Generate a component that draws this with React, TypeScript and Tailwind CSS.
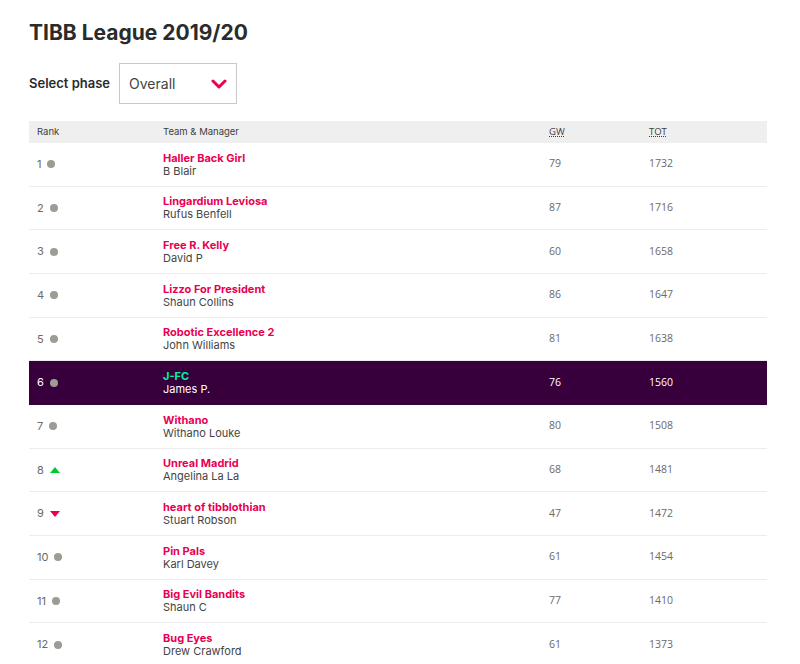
import React from "react";

type Row = { rank: number; team: string; manager: string; gw: number; tot: number; move: "same" | "up" | "down"; me?: boolean };

const rows: Row[] = [
  { rank: 1, team: "Haller Back Girl", manager: "B Blair", gw: 79, tot: 1732, move: "same" },
  { rank: 2, team: "Lingardium Leviosa", manager: "Rufus Benfell", gw: 87, tot: 1716, move: "same" },
  { rank: 3, team: "Free R. Kelly", manager: "David P", gw: 60, tot: 1658, move: "same" },
  { rank: 4, team: "Lizzo For President", manager: "Shaun Collins", gw: 86, tot: 1647, move: "same" },
  { rank: 5, team: "Robotic Excellence 2", manager: "John Williams", gw: 81, tot: 1638, move: "same" },
  { rank: 6, team: "J-FC", manager: "James P.", gw: 76, tot: 1560, move: "same", me: true },
  { rank: 7, team: "Withano", manager: "Withano Louke", gw: 80, tot: 1508, move: "same" },
  { rank: 8, team: "Unreal Madrid", manager: "Angelina La La", gw: 68, tot: 1481, move: "up" },
  { rank: 9, team: "heart of tibblothian", manager: "Stuart Robson", gw: 47, tot: 1472, move: "down" },
  { rank: 10, team: "Pin Pals", manager: "Karl Davey", gw: 61, tot: 1454, move: "same" },
  { rank: 11, team: "Big Evil Bandits", manager: "Shaun C", gw: 77, tot: 1410, move: "same" },
  { rank: 12, team: "Bug Eyes", manager: "Drew Crawford", gw: 61, tot: 1373, move: "same" },
];

function Move({ m }: { m: Row["move"] }) {
  if (m === "up")
    return (
      <svg width="10" height="6" viewBox="0 0 10 6" className="ml-[6px]">
        <polygon points="0,6 5,0 10,6" fill="#01c832" />
      </svg>
    );
  if (m === "down")
    return (
      <svg width="10" height="6" viewBox="0 0 10 6" className="ml-[6px]">
        <polygon points="0,0 10,0 5,6" fill="#e90052" />
      </svg>
    );
  return <span className="ml-[6px] inline-block h-[8px] w-[8px] rounded-full bg-[#9c9c94]" />;
}

const num = { fontFamily: "'Open Sans', sans-serif" };

export default function App() {
  return (
    <div className="w-[800px] h-[664px] overflow-hidden bg-white text-[#37003c]" style={{ fontFamily: "Inter, 'Noto Sans', sans-serif" }}>
      <div className="pl-[29px] pr-[33px]">
        <h1 className="pt-[19px] text-[21px] font-bold leading-[28px] text-[#2b2b2b]">TIBB League 2019/20</h1>
        <div className="mt-[16px] flex items-center">
          <span className="text-[13px] font-semibold text-[#2b2b2b]">Select phase</span>
          <div className="ml-[9px] flex h-[41px] w-[118px] items-center justify-between border border-[#c8c8c8] pl-[9px] pr-[9px]">
            <span className="text-[14px] text-[#444]">Overall</span>
            <svg width="16" height="10" viewBox="0 0 16 10">
              <polyline points="2,2 8,8 14,2" fill="none" stroke="#e90052" strokeWidth="3" strokeLinecap="round" strokeLinejoin="round" />
            </svg>
          </div>
        </div>
        <div className="mt-[17px]">
          <div className="flex h-[22px] items-center bg-[#efefef] text-[9.5px] text-[#3d3d3d]">
            <div className="w-[134px] pl-[8px]">Rank</div>
            <div className="w-[386px]">Team &amp; Manager</div>
            <div className="w-[100px] underline decoration-dotted" style={num}>GW</div>
            <div className="underline decoration-dotted" style={num}>TOT</div>
          </div>
          {rows.map((r) => (
            <div
              key={r.rank}
              className={`flex h-[43.67px] items-center border-b ${r.me ? "bg-[#37003c] border-[#37003c] text-white" : "border-[#ececec] text-[#6a6a6a]"}`}
            >
              <div className="flex w-[134px] items-center pl-[8px] text-[11px]">
                <span>{r.rank}</span>
                <Move m={r.move} />
              </div>
              <div className="w-[386px] pt-[1px] leading-[13px]">
                <div className={`text-[11px] font-bold ${r.me ? "text-[#05f0a0]" : "text-[#e90052]"}`}>{r.team}</div>
                <div className={`text-[11px] ${r.me ? "text-white" : "text-[#444]"}`}>{r.manager}</div>
              </div>
              <div className="w-[100px] text-[10.5px]" style={num}>{r.gw}</div>
              <div className="text-[10.5px]" style={num}>{r.tot}</div>
            </div>
          ))}
        </div>
      </div>
    </div>
  );
}
